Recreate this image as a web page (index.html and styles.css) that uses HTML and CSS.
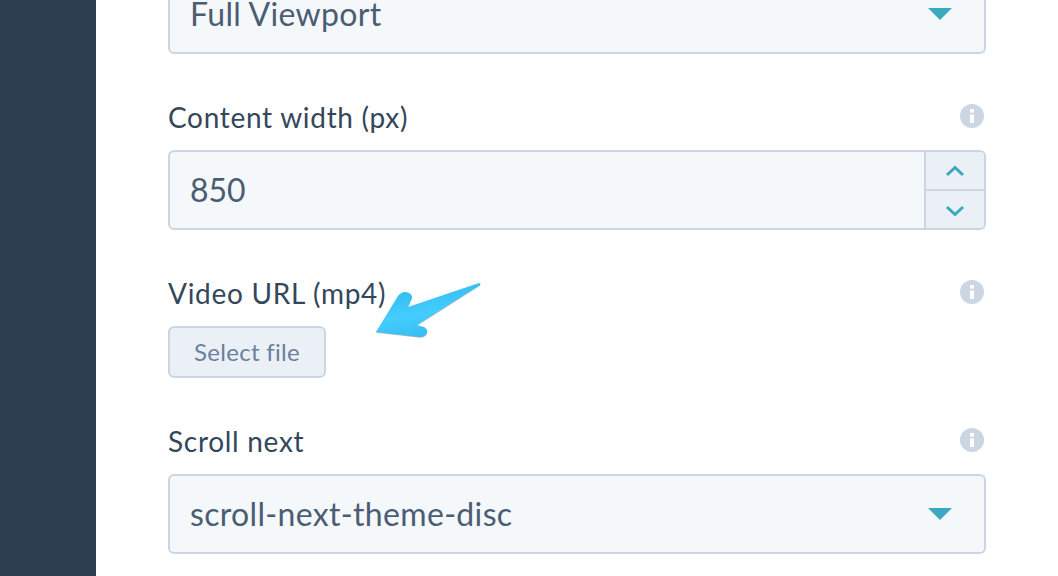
FILE: index.html
```html
<!DOCTYPE html>
<html lang="en">
<head>
    <meta charset="UTF-8">
    <meta name="viewport" content="width=device-width, initial-scale=1.0">
    <title>Module settings</title>
    <link rel="stylesheet" href="styles.css">
</head>
<body>
    <div class="sidebar"></div>
    <form class="panel">
        <div class="field">
            <div class="select">
                <span>Full Viewport</span>
                <i class="caret"></i>
            </div>
        </div>

        <div class="field">
            <div class="label-row">
                <label>Content width (px)</label>
                <svg class="info" viewBox="0 0 24 24"><circle cx="12" cy="12" r="12"/><rect x="10" y="5" width="4" height="3.6"/><rect x="10" y="10.4" width="4" height="8.6"/></svg>
            </div>
            <div class="number">
                <span class="number-value">850</span>
                <div class="stepper">
                    <div class="step step-up">
                        <svg viewBox="0 0 20 12"><path d="M2 10 L10 2.5 L18 10"/></svg>
                    </div>
                    <div class="step step-down">
                        <svg viewBox="0 0 20 12"><path d="M2 2 L10 9.5 L18 2"/></svg>
                    </div>
                </div>
            </div>
        </div>

        <div class="field">
            <div class="label-row">
                <label>Video URL (mp4)</label>
                <svg class="info" viewBox="0 0 24 24"><circle cx="12" cy="12" r="12"/><rect x="10" y="5" width="4" height="3.6"/><rect x="10" y="10.4" width="4" height="8.6"/></svg>
            </div>
            <button type="button" class="file-btn">Select file</button>
        </div>

        <div class="field">
            <div class="label-row">
                <label>Scroll next</label>
                <svg class="info" viewBox="0 0 24 24"><circle cx="12" cy="12" r="12"/><rect x="10" y="5" width="4" height="3.6"/><rect x="10" y="10.4" width="4" height="8.6"/></svg>
            </div>
            <div class="select">
                <span>scroll-next-theme-disc</span>
                <i class="caret"></i>
            </div>
        </div>
    </form>

    <!-- annotation arrow drawn over the form -->
    <svg class="arrow" viewBox="0 0 120 64">
        <defs>
            <linearGradient id="arrowFill" x1="0.2" y1="0" x2="0.5" y2="1">
                <stop offset="0" stop-color="#2fb8ea"/>
                <stop offset="0.6" stop-color="#45cdff"/>
                <stop offset="1" stop-color="#36bdf0"/>
            </linearGradient>
        </defs>
        <path class="arrow-shadow" d="M6 50.7 L28 14.7 Q33 8.7 39 11.7 Q44 14.7 41 18.7 L38 25.7 L109 1.7 Q111 1.7 110 3.7 L47 43.7 L54 45.7 Q58 47.7 57 51.7 Q55 55.7 50 55.7 Z"/>
        <path fill="url(#arrowFill)" d="M6 50 L28 14 Q33 8 39 11 Q44 14 41 18 L38 25 L109 1 Q111 1 110 3 L47 43 L54 45 Q58 47 57 51 Q55 55 50 55 Z"/>
    </svg>
</body>
</html>
```

FILE: styles.css
```css
* {
    box-sizing: border-box;
}
html, body {
    height: 100%;
}
body {
    margin: 0;
    display: flex;
    overflow: hidden;
    background-color: #FFFFFF;
    font-family: Lato, "Open Sans", sans-serif;
    color: #33475B;
}
.sidebar {
    width: 96px;
    flex-shrink: 0;
    background-color: #2D3E50;
}
.panel {
    width: 818px;
    margin-left: 72px;
    margin-top: -26px; /* page is scrolled, first field is cut off */
    display: flex;
    flex-direction: column;
    gap: 46px;
}
.label-row {
    height: 34px;
    margin-bottom: 16px;
    display: flex;
    align-items: center;
    justify-content: space-between;
}
.label-row label {
    font-size: 28px;
    font-weight: 400;
    letter-spacing: 0.7px;
}
.info {
    width: 24px;
    height: 24px;
    margin-right: 2px;
    margin-top: -2px;
    fill: #CBD6E2;
}
.info rect {
    fill: #FFFFFF;
}
.select, .number {
    height: 80px;
    background-color: #F5F8FA;
    border: 2px solid #CBD6E2;
    border-radius: 6px;
    font-size: 32px;
    color: #4B5D73;
}
.select {
    display: flex;
    align-items: center;
    justify-content: space-between;
    padding: 0 32px 2px 20px;
    letter-spacing: 0.33px;
}
.caret {
    width: 0;
    height: 0;
    margin-top: 2px;
    border-left: 12px solid transparent;
    border-right: 12px solid transparent;
    border-top: 12px solid #3CA8C0;
}
.number {
    display: flex;
    align-items: center;
    justify-content: space-between;
}
.number-value {
    padding-left: 20px;
    padding-bottom: 2px;
}
.stepper {
    width: 60px;
    height: 100%;
    display: flex;
    flex-direction: column;
    border-left: 2px solid #CBD6E2;
    background-color: #EAF0F6;
    border-radius: 0 4px 4px 0;
}
.step {
    display: flex;
    align-items: center;
    justify-content: center;
}
.step-up {
    height: 37px;
}
.step-down {
    flex: 1;
    border-top: 2px solid #CBD6E2;
    padding-top: 2px;
}
.step svg {
    width: 20px;
    height: 12px;
    fill: none;
    stroke: #3CA8C0;
    stroke-width: 3;
}
.file-btn {
    display: block;
    width: 158px;
    height: 52px;
    padding: 0 0 2px;
    background-color: #EAF0F6;
    border: 2px solid #CBD6E2;
    border-radius: 6px;
    font-family: inherit;
    font-size: 24px;
    letter-spacing: 0.3px;
    color: #6C7F9C;
    cursor: pointer;
}
.arrow {
    position: absolute;
    left: 370px;
    top: 282px;
    width: 120px;
    height: 64px;
}
.arrow-shadow {
    fill: #7A8A96;
    opacity: 0.6;
}
```
